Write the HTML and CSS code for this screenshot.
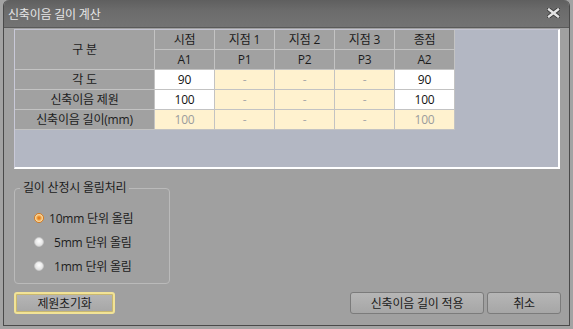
FILE: index.html
```html
<!DOCTYPE html>
<html lang="ko">
<head>
<meta charset="utf-8">
<title>신축이음 길이 계산</title>
<link rel="stylesheet" href="styles.css">
</head>
<body>
<div class="window">
  <div class="titlebar">
    <span class="title">신축이음 길이 계산</span>
    <svg class="close" width="13" height="10" viewBox="0 0 13 10">
      <path d="M2 1.5 L11 8.5 M11 1.5 L2 8.5" stroke="#3a3a3a" stroke-width="4.2" stroke-linecap="square"/>
      <path d="M2 1.5 L11 8.5 M11 1.5 L2 8.5" stroke="#e4e4e4" stroke-width="2.4" stroke-linecap="square"/>
    </svg>
  </div>
  <div class="content">
    <div class="grid-panel">
      <table class="grid">
        <tr>
          <th class="label-col" rowspan="2">구 분</th>
          <th>시점</th><th>지점 1</th><th>지점 2</th><th>지점 3</th><th>종점</th>
        </tr>
        <tr>
          <th>A1</th><th>P1</th><th>P2</th><th>P3</th><th>A2</th>
        </tr>
        <tr>
          <th class="label-col">각 도</th>
          <td class="edit">90</td><td class="ro dash">-</td><td class="ro dash">-</td><td class="ro dash">-</td><td class="edit">90</td>
        </tr>
        <tr>
          <th class="label-col">신축이음 제원</th>
          <td class="edit">100</td><td class="ro dash">-</td><td class="ro dash">-</td><td class="ro dash">-</td><td class="edit">100</td>
        </tr>
        <tr>
          <th class="label-col">신축이음 길이(mm)</th>
          <td class="ro muted">100</td><td class="ro dash">-</td><td class="ro dash">-</td><td class="ro dash">-</td><td class="ro muted">100</td>
        </tr>
      </table>
    </div>
    <fieldset class="group">
      <legend>길이 산정시 올림처리</legend>
      <div class="radio-row"><span class="radio checked"></span><span class="radio-label">10mm 단위 올림</span></div>
      <div class="radio-row"><span class="radio"></span><span class="radio-label pad">5mm 단위 올림</span></div>
      <div class="radio-row"><span class="radio"></span><span class="radio-label pad">1mm 단위 올림</span></div>
    </fieldset>
    <div class="buttons">
      <button class="btn btn-reset focused">제원초기화</button>
      <span class="spacer"></span>
      <button class="btn btn-apply">신축이음 길이 적용</button>
      <button class="btn btn-cancel">취소</button>
    </div>
  </div>
</div>
</body>
</html>
```
FILE: styles.css
```css
html, body {
  margin: 0;
  padding: 0;
}
body {
  background: #a3a3a3;
  font-family: "Open Sans", "Noto Sans CJK KR", sans-serif;
  font-size: 12px;
  color: #1c1c1c;
  width: 573px;
  height: 329px;
  overflow: hidden;
}
.window {
  margin-left: 3px;
  width: 567px;
  height: 326px;
  box-sizing: border-box;
  border: 1px solid #4a4a4a;
  border-top: none;
  border-radius: 6px 6px 0 0;
  background: #a0a0a0;
  display: flex;
  flex-direction: column;
  overflow: hidden;
}
.titlebar {
  height: 28px;
  flex: none;
  background: linear-gradient(#5f5f5f, #6c6c6c 40%, #737373);
  display: flex;
  align-items: center;
  padding: 0 5px 0 4px;
  border-bottom: 1px solid #5a5a5a;
  box-sizing: border-box;
}
.title {
  color: #e6e6e6;
  font-size: 12px;
  letter-spacing: -0.2px;
  flex: 1;
  padding-top: 1px;
}
.close {
  margin-right: 4px;
  margin-top: -1px;
}
.content {
  padding: 1px 7px 0 10px;
  display: flex;
  flex-direction: column;
}
.grid-panel {
  width: 546px;
  height: 140px;
  box-sizing: border-box;
  background: #b3b7c3;
  border-left: 1px solid #c9c9d8;
  border-top: 1px solid #c4c4d2;
  border-right: 2px solid #ffffff;
  border-bottom: 2px solid #ffffff;
}
.grid {
  border-collapse: separate;
  border-spacing: 0;
  table-layout: fixed;
}
.grid th, .grid td {
  box-sizing: border-box;
  width: 60px;
  height: 20px;
  padding: 0;
  border-right: 1px solid #c3c3c3;
  border-bottom: 1px solid #c3c3c3;
  text-align: center;
  vertical-align: middle;
  font-weight: normal;
  font-size: 12px;
  line-height: 18px;
  letter-spacing: -0.2px;
}
.grid th {
  background: #a1a1a1;
  color: #1c1c1c;
}
.grid th.label-col {
  width: 140px;
}
.grid td.edit {
  background: #ffffff;
  color: #111;
}
.grid td.ro {
  background: #fff2cf;
}
.grid td.dash {
  color: #a9a9a9;
}
.grid td.muted {
  color: #9c9c9c;
}
.group {
  margin: 12px 0 0 0;
  width: 156px;
  height: 103px;
  box-sizing: border-box;
  padding: 13px 0 0 0;
  border: 1px solid #bababa;
  border-radius: 4px;
  display: flex;
  flex-direction: column;
  gap: 4px;
}
.group legend {
  margin-left: 5px;
  padding: 0 3px;
  letter-spacing: -0.2px;
  line-height: 14px;
}
.radio-row {
  display: flex;
  align-items: center;
  height: 20px;
  padding-left: 19px;
}
.radio {
  width: 10px;
  height: 10px;
  box-sizing: border-box;
  border-radius: 50%;
  border: 1px solid #c7c7c7;
  background: radial-gradient(circle at 50% 40%, #ffffff, #e2e2e2 70%);
  flex: none;
}
.radio.checked {
  border: 1px solid #d77a1c;
  background: radial-gradient(circle, #e06b0a 0, #f0a040 35%, #f8d8a0 60%, #fbe8c8 100%);
}
.radio-label {
  margin-left: 5px;
  letter-spacing: -0.2px;
}
.radio-label.pad {
  margin-left: 10px;
}
.buttons {
  display: flex;
  margin-top: 8px;
  height: 22px;
  margin-right: 1px;
}
.spacer {
  flex: 1;
}
.btn {
  height: 22px;
  box-sizing: border-box;
  font-family: inherit;
  font-size: 12px;
  color: #1c1c1c;
  border: 1px solid #7b7b7b;
  border-radius: 3px;
  background: linear-gradient(#b6b6b6, #a6a6a6);
  padding: 0;
  letter-spacing: -0.2px;
}
.btn-reset {
  width: 101px;
  margin-left: 0;
}
.btn.focused {
  border: 2px solid #f2e396;
  box-shadow: inset 0 0 0 1px #c9b870;
}
.btn-apply {
  width: 134px;
  margin-right: 3px;
}
.btn-cancel {
  width: 74px;
}
```
